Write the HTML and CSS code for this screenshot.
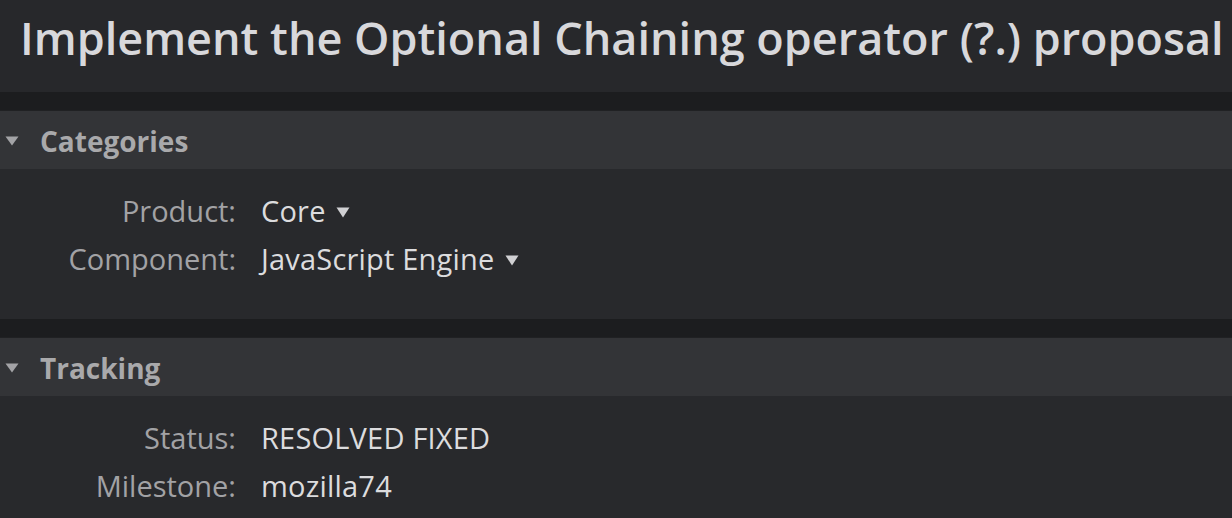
FILE: index.html
```html
<!DOCTYPE html>
<html lang="en">
<head>
<meta charset="utf-8">
<title>Bug</title>
<link rel="stylesheet" href="styles.css">
</head>
<body>
<header class="title-bar">
  <h1 class="title">Implement the Optional Chaining operator (?.) proposal</h1>
</header>
<div class="gap"></div>
<section class="module">
  <div class="module-head">
    <svg class="twisty" width="14" height="10" viewBox="0 0 14 10"><path d="M0.5 0.5 H13.5 L7 9.5 Z" fill="#a3a3a6"/></svg>
    <span class="module-title">Categories</span>
  </div>
  <div class="module-body">
    <div class="label">Product:</div>
    <div class="value">Core<svg class="drop" width="14" height="11" viewBox="0 0 14 11"><path d="M0.5 0.5 H13.5 L7 10.5 Z" fill="#d0d0d3"/></svg></div>
    <div class="label">Component:</div>
    <div class="value">JavaScript Engine<svg class="drop" width="14" height="11" viewBox="0 0 14 11"><path d="M0.5 0.5 H13.5 L7 10.5 Z" fill="#d0d0d3"/></svg></div>
  </div>
</section>
<div class="gap"></div>
<section class="module">
  <div class="module-head">
    <svg class="twisty" width="14" height="10" viewBox="0 0 14 10"><path d="M0.5 0.5 H13.5 L7 9.5 Z" fill="#a3a3a6"/></svg>
    <span class="module-title">Tracking</span>
  </div>
  <div class="module-body">
    <div class="label">Status:</div>
    <div class="value">RESOLVED FIXED</div>
    <div class="label">Milestone:</div>
    <div class="value">mozilla74</div>
  </div>
</section>
</body>
</html>
```
FILE: styles.css
```css
html, body {
  margin: 0;
  padding: 0;
}
body {
  background: #28292c;
  font-family: "Open Sans", "Noto Sans", sans-serif;
  overflow: hidden;
}
.title-bar {
  height: 92px;
  background: #27282b;
  display: flex;
  align-items: flex-start;
  padding: 15px 0 0 20px;
  box-sizing: border-box;
}
.title {
  margin: 0;
  font-size: 45px;
  font-weight: 600;
  color: #d8d8db;
  line-height: 45px;
  white-space: nowrap;
}
.gap {
  height: 19px;
  background: #1c1d1f;
  box-shadow: inset 0 -1px 0 #202123;
}
.module-head {
  height: 58px;
  background: #333437;
  display: flex;
  align-items: center;
  color: #a9a9ab;
}
.twisty {
  display: block;
  margin: 1px 21px 0 5px;
}
.module-title {
  font-size: 28px;
  font-weight: 700;
  line-height: 58px;
  padding-top: 1px;
}
.module-body {
  display: grid;
  grid-template-columns: 236px auto;
  column-gap: 25px;
  justify-content: start;
  padding: 18px 0 36px;
  font-size: 29px;
  line-height: 48px;
}
.label {
  text-align: right;
  color: #a2a2a5;
}
.value {
  color: #dcdcde;
  display: flex;
  align-items: center;
  letter-spacing: 0.2px;
}
.drop {
  display: block;
  margin: 2px 0 0 10px;
}
```
